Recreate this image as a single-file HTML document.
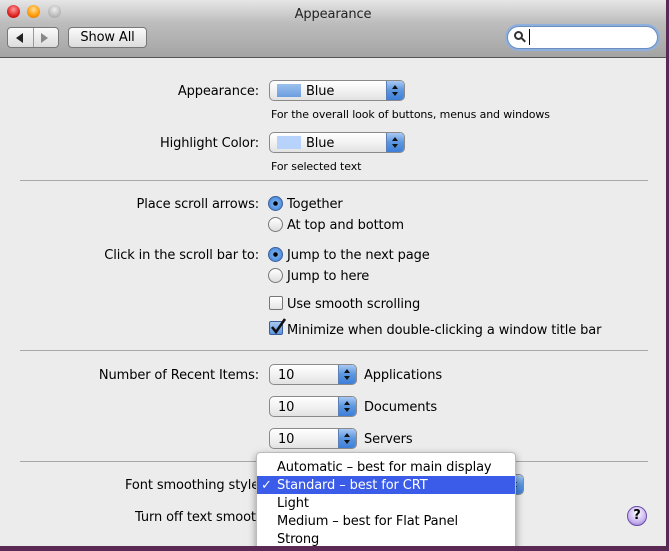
<!DOCTYPE html>
<html><head><meta charset="utf-8"><style>
*{margin:0;padding:0;box-sizing:border-box}
body{width:669px;height:551px;overflow:hidden;background:#5a2a55;font-family:"DejaVu Sans","Liberation Sans",sans-serif;font-size:13px;letter-spacing:-0.12px;color:#000;position:relative}
.win{position:absolute;left:0;top:0;width:666px;height:546px;background:#ececec;overflow:hidden}
.tb{position:absolute;left:0;top:0;width:666px;height:58px;background:linear-gradient(#e6e6e6,#bdbdbd 40%,#a4a4a4);border-bottom:1px solid #555}
.a{position:absolute;white-space:nowrap}
.t{margin-top:1px}
.lbl{position:absolute;right:407px;white-space:nowrap;margin-top:1px}
.sep{position:absolute;left:20px;width:628px;height:1px;background:#a8a8a8}
.pop{position:absolute;height:21px;border:1px solid #8a8a8a;border-radius:5px;background:linear-gradient(#fff,#f2f2f2 50%,#e2e2e2);overflow:hidden}
.pop .ar{position:absolute;right:0;top:0;width:18px;height:100%;background:linear-gradient(#a8c8f2,#5a95e0 50%,#3e7fd8);border-left:1px solid #5a7fb8}
.pop .ar:before{content:"";position:absolute;left:5px;top:4px;border:3px solid transparent;border-bottom:4px solid #111;border-top:0}
.pop .ar:after{content:"";position:absolute;left:5px;top:11px;border:3px solid transparent;border-top:4px solid #111;border-bottom:0}
.pop span{position:absolute;top:3px;left:8px}
.sw{position:absolute;left:7px;top:3px;width:24px;height:13px}
.rad{position:absolute;width:15px;height:15px;border-radius:50%;border:1px solid #777;background:linear-gradient(#fff,#ddd)}
.rad.on{background:radial-gradient(circle,#000 0 2px,#6ea8ec 2.5px,#3d80d8);border-color:#3a5f9a}
.cb{position:absolute;width:14px;height:14px;border:1px solid #777;background:linear-gradient(#fff,#e4e4e4);border-radius:2px}
.menu{position:absolute;left:256px;top:452px;width:260px;height:100px;background:#fff;border:1px solid #bbb;border-radius:4px;box-shadow:0 3px 8px rgba(0,0,0,.4)}
.mi{position:absolute;left:0;width:258px;height:18px;line-height:20px;padding-left:20px;white-space:nowrap}
</style></head><body>
<div class="win">
<div class="tb">
 <div class="a" style="left:7px;top:5px;width:13px;height:13px;border-radius:50%;background:radial-gradient(circle at 50% 35%,#f99,#d22 60%,#a00)"></div>
 <div class="a" style="left:27px;top:5px;width:13px;height:13px;border-radius:50%;background:radial-gradient(circle at 50% 35%,#fd9,#f90 60%,#c60)"></div>
 <div class="a" style="left:48px;top:5px;width:13px;height:13px;border-radius:50%;background:radial-gradient(circle at 50% 35%,#eee,#bbb 60%,#999)"></div>
 <div class="a" style="left:0;width:666px;top:7px;text-align:center;color:#222">Appearance</div>
 <div class="a" style="left:7px;top:27px;width:52px;height:21px;border:1px solid #777;border-radius:4px;background:linear-gradient(#fbfbfb,#dcdcdc)">
  <div class="a" style="left:25px;top:0;width:1px;height:19px;background:#999"></div>
  <div class="a" style="left:8px;top:5px;border:5px solid transparent;border-right:7px solid #222;border-left:0"></div>
  <div class="a" style="left:33px;top:5px;border:5px solid transparent;border-left:7px solid #888;border-right:0"></div>
 </div>
 <div class="a" style="left:68px;top:27px;width:79px;height:21px;border:1px solid #777;border-radius:4px;background:linear-gradient(#fbfbfb,#dcdcdc);text-align:center;line-height:20px">Show All</div>
 <div class="a" style="left:507px;top:26px;width:151px;height:23px;border-radius:12px;background:#fff;border:1px solid #6a8ec0;box-shadow:0 0 0 2px #8fb0dc"></div>
 <div class="a" style="left:514px;top:31px;width:9px;height:9px;border:2px solid #333;border-radius:50%"></div>
 <div class="a" style="left:521px;top:39px;width:5px;height:2px;background:#333;transform:rotate(45deg)"></div>
 <div class="a" style="left:529px;top:29px;width:1px;height:16px;background:#000"></div>
</div>

<div class="lbl" style="top:83px">Appearance:</div>
<div class="pop" style="left:269px;top:80px;width:136px"><div class="sw" style="background:linear-gradient(#9cc0ec,#6a9ee0)"></div><span style="left:36px">Blue</span><div class="ar"></div></div>
<div class="a t" style="left:271px;top:107px;font-size:11px">For the overall look of buttons, menus and windows</div>
<div class="lbl" style="top:135px">Highlight Color:</div>
<div class="pop" style="left:269px;top:132px;width:136px"><div class="sw" style="background:#b7d3fb"></div><span style="left:36px">Blue</span><div class="ar"></div></div>
<div class="a t" style="left:271px;top:159px;font-size:11px">For selected text</div>
<div class="sep" style="top:180px"></div>

<div class="lbl" style="top:196px">Place scroll arrows:</div>
<div class="rad on" style="left:268px;top:196px"></div><div class="a t" style="left:287px;top:196px">Together</div>
<div class="rad" style="left:268px;top:217px"></div><div class="a t" style="left:287px;top:217px">At top and bottom</div>
<div class="lbl" style="top:247px">Click in the scroll bar to:</div>
<div class="rad on" style="left:268px;top:247px"></div><div class="a t" style="left:287px;top:247px">Jump to the next page</div>
<div class="rad" style="left:268px;top:268px"></div><div class="a t" style="left:287px;top:268px">Jump to here</div>
<div class="cb" style="left:269px;top:296px"></div><div class="a t" style="left:287px;top:296px">Use smooth scrolling</div>
<div class="cb" style="left:269px;top:321px;background:linear-gradient(#a8c8f2,#5a95e0);border-color:#3a5f9a"></div>
<svg class="a" style="left:269px;top:317px" width="18" height="18"><path d="M3 10 L7 15 L16 2" stroke="#111" stroke-width="2.6" fill="none"/></svg>
<div class="a t" style="left:287px;top:322px">Minimize when double-clicking a window title bar</div>
<div class="sep" style="top:350px"></div>

<div class="lbl" style="top:367px">Number of Recent Items:</div>
<div class="pop" style="left:269px;top:364px;width:88px"><span>10</span><div class="ar"></div></div><div class="a t" style="left:364px;top:367px">Applications</div>
<div class="pop" style="left:269px;top:396px;width:88px"><span>10</span><div class="ar"></div></div><div class="a t" style="left:364px;top:399px">Documents</div>
<div class="pop" style="left:269px;top:428px;width:88px"><span>10</span><div class="ar"></div></div><div class="a t" style="left:364px;top:431px">Servers</div>
<div class="sep" style="top:461px"></div>

<div class="a t" style="left:125px;top:477px">Font smoothing style</div>
<div class="a t" style="left:135px;top:509px">Turn off text smoothing</div>
<div class="pop" style="left:500px;top:474px;width:24px"><div class="ar"></div></div>
<div class="a" style="left:627px;top:506px;width:20px;height:20px;border-radius:50%;background:radial-gradient(circle at 50% 35%,#fff,#c9b5f0 60%,#8a6ad0);border:1px solid #6a4fa8;text-align:center;font-weight:bold;font-size:13px;line-height:18px">?</div>

<div class="menu">
 <div class="mi" style="top:5px">Automatic – best for main display</div>
 <div class="mi" style="top:23px;background:#3a5ce8;color:#fff"><span style="position:absolute;left:4px">✓</span>Standard – best for CRT</div>
 <div class="mi" style="top:41px">Light</div>
 <div class="mi" style="top:59px">Medium – best for Flat Panel</div>
 <div class="mi" style="top:77px">Strong</div>
</div>
</div>
</body></html>
